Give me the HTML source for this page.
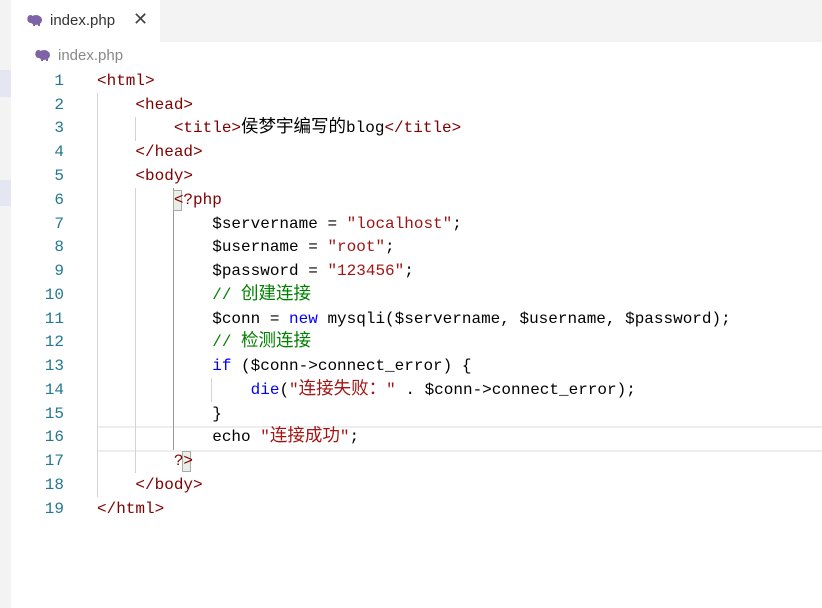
<!DOCTYPE html>
<html><head><meta charset="utf-8"><style>
body{margin:0;width:822px;height:608px;background:#fff;overflow:hidden;position:relative;font-family:"Liberation Sans","Noto Sans CJK SC",sans-serif}
.side{position:absolute;left:0;top:0;width:11px;height:608px;background:#f3f3f3}
.tabbar{position:absolute;left:11px;top:0;right:0;height:42px;background:#f3f3f3}
.tab{position:absolute;left:11px;top:0;width:149px;height:42px;background:#fff}
.tab .t{position:absolute;left:39px;top:12px;font-size:15px;color:#333}
.tab .x{position:absolute;left:122px;top:9px;font-size:18px;color:#444}
.crumb{position:absolute;left:58px;top:47px;font-size:15px;color:#888}
.code{position:absolute;left:0;top:71px;font-family:"Liberation Mono","Noto Sans CJK SC",monospace;font-size:16px;line-height:20px}
.ln{position:absolute;left:20px;width:44px;text-align:right;color:#237893}
.l{position:absolute;left:97px;white-space:pre;color:#000;height:20px;line-height:20px}
.z{font-size:17.5px;line-height:20px;vertical-align:top}
.tg{color:#800000}.s{color:#a31515}.k{color:#0000ff}.c{color:#008000}
.g{position:absolute;width:1px;background:#d3d3d3}
</style></head><body>
<div class="side"></div>
<div style="position:absolute;left:0;top:70px;width:11px;height:27px;background:#e4e6f1"></div>
<div style="position:absolute;left:0;top:180px;width:11px;height:26px;background:#e4e6f1"></div>
<div class="tabbar"></div>
<div class="tab">
<svg style="position:absolute;left:16px;top:14px" width="16" height="13" viewBox="0 0 16 13"><ellipse cx="9" cy="6" rx="6" ry="5" fill="#7e63a6"/><ellipse cx="3.5" cy="5" rx="3.2" ry="4" fill="#7e63a6"/><rect x="6" y="8" width="2" height="4" fill="#7e63a6"/><rect x="11" y="8" width="2" height="4" fill="#7e63a6"/></svg>
<span class="t">index.php</span><span class="x">✕</span></div>
<svg style="position:absolute;left:35px;top:49px" width="16" height="13" viewBox="0 0 16 13"><ellipse cx="9" cy="6" rx="6" ry="5" fill="#7e63a6"/><ellipse cx="3.5" cy="5" rx="3.2" ry="4" fill="#7e63a6"/><rect x="6" y="8" width="2" height="4" fill="#7e63a6"/><rect x="11" y="8" width="2" height="4" fill="#7e63a6"/></svg>
<div class="crumb">index.php</div>
<div style="position:absolute;left:97px;top:426px;width:725px;height:22px;border-top:2px solid #eee;border-bottom:2px solid #eee"></div>
<div class="g" style="left:97px;top:93px;height:404px"></div>
<div class="g" style="left:135px;top:117px;height:24px"></div>
<div class="g" style="left:135px;top:188px;height:285px"></div>
<div class="g" style="left:173px;top:188px;height:262px;background:#999"></div>
<div class="g" style="left:211px;top:378px;height:24px"></div>
<div style="position:absolute;left:173px;top:190px;width:9px;height:21px;background:#e8efe8;border:1px solid #aaa;box-sizing:border-box"></div>
<div style="position:absolute;left:182px;top:451px;width:9px;height:21px;background:#e8efe8;border:1px solid #aaa;box-sizing:border-box"></div>
<div class="code">
<div class="ln" style="top:0px">1</div><div class="l" style="top:0px"><span class="tg">&lt;html&gt;</span></div>
<div class="ln" style="top:24px">2</div><div class="l" style="top:24px">    <span class="tg">&lt;head&gt;</span></div>
<div class="ln" style="top:47px">3</div><div class="l" style="top:47px">        <span class="tg">&lt;title&gt;</span><span class="z">侯梦宇编写的</span>blog<span class="tg">&lt;/title&gt;</span></div>
<div class="ln" style="top:71px">4</div><div class="l" style="top:71px">    <span class="tg">&lt;/head&gt;</span></div>
<div class="ln" style="top:95px">5</div><div class="l" style="top:95px">    <span class="tg">&lt;body&gt;</span></div>
<div class="ln" style="top:119px">6</div><div class="l" style="top:119px">        <span class="tg">&lt;?php</span></div>
<div class="ln" style="top:143px">7</div><div class="l" style="top:143px">            $servername = <span class="s">"localhost"</span>;</div>
<div class="ln" style="top:166px">8</div><div class="l" style="top:166px">            $username = <span class="s">"root"</span>;</div>
<div class="ln" style="top:190px">9</div><div class="l" style="top:190px">            $password = <span class="s">"123456"</span>;</div>
<div class="ln" style="top:214px">10</div><div class="l" style="top:214px">            <span class="c">// <span class="z">创建连接</span></span></div>
<div class="ln" style="top:238px">11</div><div class="l" style="top:238px">            $conn = <span class="k">new</span> mysqli($servername, $username, $password);</div>
<div class="ln" style="top:261px">12</div><div class="l" style="top:261px">            <span class="c">// <span class="z">检测连接</span></span></div>
<div class="ln" style="top:285px">13</div><div class="l" style="top:285px">            <span class="k">if</span> ($conn-&gt;connect_error) {</div>
<div class="ln" style="top:309px">14</div><div class="l" style="top:309px">                <span class="k">die</span>(<span class="s">"<span class="z">连接失败：</span>"</span> . $conn-&gt;connect_error);</div>
<div class="ln" style="top:333px">15</div><div class="l" style="top:333px">            }</div>
<div class="ln" style="top:356px">16</div><div class="l" style="top:356px">            echo <span class="s">"<span class="z">连接成功</span>"</span>;</div>
<div class="ln" style="top:380px">17</div><div class="l" style="top:380px">        <span class="tg">?&gt;</span></div>
<div class="ln" style="top:404px">18</div><div class="l" style="top:404px">    <span class="tg">&lt;/body&gt;</span></div>
<div class="ln" style="top:428px">19</div><div class="l" style="top:428px"><span class="tg">&lt;/html&gt;</span></div>
</div>
</body></html>
